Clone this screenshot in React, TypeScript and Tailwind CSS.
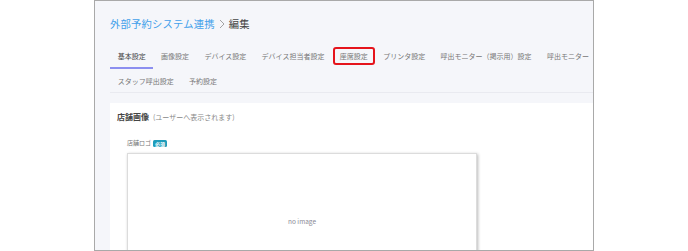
import React from 'react';

const font = { fontFamily: '"Noto Sans CJK JP", "Noto Sans", sans-serif' };

const row1 = [
    '基本設定',
    '画像設定',
    'デバイス設定',
    'デバイス担当者設定',
    '座席設定',
    'プリンタ設定',
    '呼出モニター（掲示用）設定',
    '呼出モニター',
];
const row2 = ['スタッフ呼出設定', '予約設定'];

export default function App() {
    return (
        <div className="w-[688px] h-[251px] bg-white pl-[94px]" style={font}>
            <div className="w-[500px] h-[251px] border border-[#a9a9a9] bg-[#f5f6fa] overflow-hidden flex flex-col">
                {/* breadcrumb */}
                <div className="pl-[15px] pt-[15px] flex items-center text-[10.3px] leading-[15px] tracking-[0.2px] whitespace-nowrap">
                    <span className="text-[#42a0ea]">外部予約システム連携</span>
                    <svg width="8" height="10" viewBox="0 0 8 10" className="mx-[3px]">
                        <path d="M2 1 L6 5 L2 9" fill="none" stroke="#9a9a9a" strokeWidth="0.9" />
                    </svg>
                    <span className="text-[#444]">編集</span>
                </div>

                {/* tabs */}
                <div className="ml-[15px] mt-[15px] border-b border-[#e9eaf0]">
                    <div className="flex flex-nowrap whitespace-nowrap text-[7px] leading-[10px] text-[#777]">
                        {row1.map((t, i) => (
                            <div
                                key={t}
                                className={`px-[7.7px] pt-[5px] pb-[6px] border-b-2 ${i === 0 ? 'border-[#8c8ff0] text-[#444]' : 'border-transparent'}`}
                            >
                                {t === '座席設定' ? (
                                    <span className="relative">
                                        {t}
                                        <span className="absolute -left-[7px] -right-[7px] -top-[4px] -bottom-[4px] border-2 border-[#e5141c] rounded-[3px]" />
                                    </span>
                                ) : (
                                    t
                                )}
                            </div>
                        ))}
                    </div>
                    <div className="flex whitespace-nowrap text-[7px] leading-[10px] text-[#777]">
                        {row2.map((t) => (
                            <div key={t} className="px-[7.7px] pt-[7px] pb-[6px]">
                                {t}
                            </div>
                        ))}
                    </div>
                </div>

                {/* panel */}
                <div className="ml-[15px] mt-[10px] flex-1 bg-white pl-[7px] pt-[9px]">
                    <div className="flex items-baseline whitespace-nowrap leading-[10px]">
                        <span className="text-[8px] font-bold text-[#444]">店舗画像</span>
                        <span className="ml-[4px] text-[7px] text-[#888]">(ユーザーへ表示されます)</span>
                    </div>
                    <div className="ml-[10px] mt-[17px] flex items-center leading-[8px]">
                        <span className="text-[6px] text-[#777]">店舗ロゴ</span>
                        <span className="ml-[2px] bg-[#1d9cba] text-white text-[5px] leading-[7px] px-[2px] rounded-[1.5px] font-bold">必須</span>
                    </div>
                    <div className="ml-[10px] mt-[6px] w-[350px] h-[138px] border border-[#dcdcdc] shadow-[1px_1px_3px_rgba(0,0,0,0.28)] flex items-center justify-center">
                        <span className="text-[6.5px] text-[#8a8a96]">no image</span>
                    </div>
                </div>
            </div>
        </div>
    );
}
